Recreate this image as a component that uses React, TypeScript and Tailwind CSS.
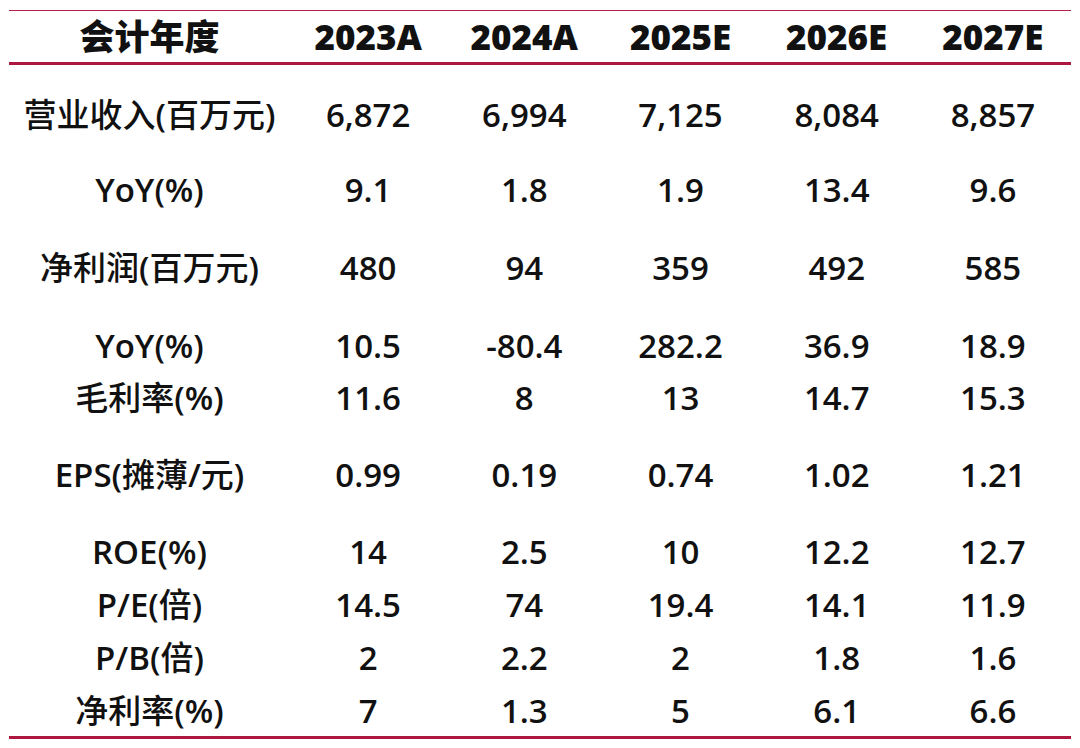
import React from "react";

type Row = {
  label: string;
  values: string[];
  height: number;
};

const years = ["2023A", "2024A", "2025E", "2026E", "2027E"];

// row height = distance to the next row's text line
const rows: Row[] = [
  { label: "营业收入(百万元)", values: ["6,872", "6,994", "7,125", "8,084", "8,857"], height: 75 },
  { label: "YoY(%)", values: ["9.1", "1.8", "1.9", "13.4", "9.6"], height: 78 },
  { label: "净利润(百万元)", values: ["480", "94", "359", "492", "585"], height: 78 },
  { label: "YoY(%)", values: ["10.5", "-80.4", "282.2", "36.9", "18.9"], height: 52 },
  { label: "毛利率(%)", values: ["11.6", "8", "13", "14.7", "15.3"], height: 77 },
  { label: "EPS(摊薄/元)", values: ["0.99", "0.19", "0.74", "1.02", "1.21"], height: 77 },
  { label: "ROE(%)", values: ["14", "2.5", "10", "12.2", "12.7"], height: 53 },
  { label: "P/E(倍)", values: ["14.5", "74", "19.4", "14.1", "11.9"], height: 53 },
  { label: "P/B(倍)", values: ["2", "2.2", "2", "1.8", "1.6"], height: 53 },
  { label: "净利率(%)", values: ["7", "1.3", "5", "6.1", "6.6"], height: 49 },
];

const font = { fontFamily: '"Open Sans", "Noto Sans CJK SC", sans-serif' };

// CJK glyphs look lighter than the latin ones in the source
function Label({ text }: { text: string }) {
  const parts = text.split(/([\u4e00-\u9fff]+)/).filter(Boolean);
  return (
    <>
      {parts.map((p, i) =>
        /[\u4e00-\u9fff]/.test(p) ? (
          <span key={i} className="font-medium">
            {p}
          </span>
        ) : (
          <span key={i}>{p}</span>
        )
      )}
    </>
  );
}

export default function App() {
  return (
    <div className="w-[1080px] h-[748px] bg-white overflow-hidden text-[#111]" style={font}>
      <div className="ml-[9px] w-[1062px] pt-[10px]">
        {/* Header */}
        <div className="border-t border-[#b3204a]">
          <div className="flex h-[51px] items-center pt-[1px] text-[35px] font-extrabold">
            <div className="w-[281px] text-center">会计年度</div>
            {years.map((y) => (
              <div key={y} className="flex-1 text-center">
                {y}
              </div>
            ))}
          </div>
        </div>
        <div className="h-[3px] bg-[#ad1740]" />

        {/* Body */}
        <div className="pt-[24px]">
          {rows.map((r, i) => (
            <div key={i} style={{ height: r.height }}>
              <div className="flex h-[52px] items-center text-[33px] font-semibold">
                <div className="w-[281px] text-center">
                  <Label text={r.label} />
                </div>
                {r.values.map((v, j) => (
                  <div key={j} className="flex-1 text-center">
                    {v}
                  </div>
                ))}
              </div>
            </div>
          ))}
        </div>
        <div className="mt-[2px] h-[3px] bg-[#ad1740]" />
      </div>
    </div>
  );
}
